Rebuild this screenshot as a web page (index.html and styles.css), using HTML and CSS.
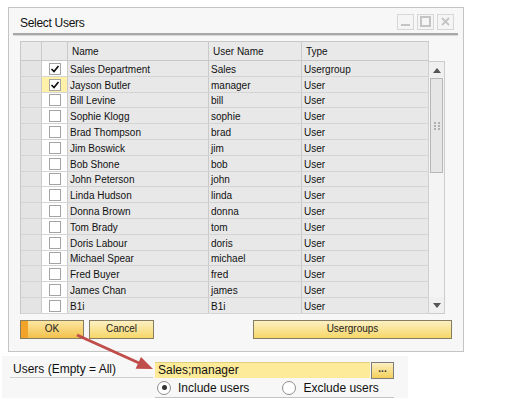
FILE: index.html
```html
<!DOCTYPE html>
<html>
<head>
<meta charset="utf-8">
<link rel="stylesheet" href="styles.css">
</head>
<body>
<div class="page">
  <div class="dialog">
    <div class="titlebar">
      <span class="title">Select Users</span>
      <div class="wbtns">
        <span class="wbtn"><svg width="11" height="11" viewBox="0 0 11 11"><rect x="1" y="8" width="9" height="2" fill="#c4c4c4"/></svg></span>
        <span class="wbtn"><svg width="11" height="11" viewBox="0 0 11 11"><rect x="1" y="1" width="9" height="9" fill="none" stroke="#c4c4c4" stroke-width="2"/></svg></span>
        <span class="wbtn"><svg width="11" height="11" viewBox="0 0 11 11"><path d="M2 2 L9 9 M9 2 L2 9" stroke="#c4c4c4" stroke-width="1.8"/></svg></span>
      </div>
    </div>
    <div class="sep"></div>
    <div class="gridwrap">
      <div class="grid">
        <div class="row head">
          <div class="c rh"></div><div class="c cb"></div><div class="c nm">Name</div><div class="c un">User Name</div><div class="c ty">Type</div>
        </div>
        <div class="row"><div class="c rh"></div><div class="c cb"><span class="chk on"><svg width="10" height="10" viewBox="0 0 10 10"><path d="M1.5 5 L4 7.5 L8.5 2" fill="none" stroke="#111" stroke-width="1.7"/></svg></span></div><div class="c nm">Sales Department</div><div class="c un">Sales</div><div class="c ty">Usergroup</div></div>
        <div class="row"><div class="c rh"></div><div class="c cb focus"><span class="chk on"><svg width="10" height="10" viewBox="0 0 10 10"><path d="M1.5 5 L4 7.5 L8.5 2" fill="none" stroke="#111" stroke-width="1.7"/></svg></span></div><div class="c nm">Jayson Butler</div><div class="c un">manager</div><div class="c ty">User</div></div>
        <div class="row"><div class="c rh"></div><div class="c cb"><span class="chk"></span></div><div class="c nm">Bill Levine</div><div class="c un">bill</div><div class="c ty">User</div></div>
        <div class="row"><div class="c rh"></div><div class="c cb"><span class="chk"></span></div><div class="c nm">Sophie Klogg</div><div class="c un">sophie</div><div class="c ty">User</div></div>
        <div class="row"><div class="c rh"></div><div class="c cb"><span class="chk"></span></div><div class="c nm">Brad Thompson</div><div class="c un">brad</div><div class="c ty">User</div></div>
        <div class="row"><div class="c rh"></div><div class="c cb"><span class="chk"></span></div><div class="c nm">Jim Boswick</div><div class="c un">jim</div><div class="c ty">User</div></div>
        <div class="row"><div class="c rh"></div><div class="c cb"><span class="chk"></span></div><div class="c nm">Bob Shone</div><div class="c un">bob</div><div class="c ty">User</div></div>
        <div class="row"><div class="c rh"></div><div class="c cb"><span class="chk"></span></div><div class="c nm">John Peterson</div><div class="c un">john</div><div class="c ty">User</div></div>
        <div class="row"><div class="c rh"></div><div class="c cb"><span class="chk"></span></div><div class="c nm">Linda Hudson</div><div class="c un">linda</div><div class="c ty">User</div></div>
        <div class="row"><div class="c rh"></div><div class="c cb"><span class="chk"></span></div><div class="c nm">Donna Brown</div><div class="c un">donna</div><div class="c ty">User</div></div>
        <div class="row"><div class="c rh"></div><div class="c cb"><span class="chk"></span></div><div class="c nm">Tom Brady</div><div class="c un">tom</div><div class="c ty">User</div></div>
        <div class="row"><div class="c rh"></div><div class="c cb"><span class="chk"></span></div><div class="c nm">Doris Labour</div><div class="c un">doris</div><div class="c ty">User</div></div>
        <div class="row"><div class="c rh"></div><div class="c cb"><span class="chk"></span></div><div class="c nm">Michael Spear</div><div class="c un">michael</div><div class="c ty">User</div></div>
        <div class="row"><div class="c rh"></div><div class="c cb"><span class="chk"></span></div><div class="c nm">Fred Buyer</div><div class="c un">fred</div><div class="c ty">User</div></div>
        <div class="row"><div class="c rh"></div><div class="c cb"><span class="chk"></span></div><div class="c nm">James Chan</div><div class="c un">james</div><div class="c ty">User</div></div>
        <div class="row"><div class="c rh"></div><div class="c cb"><span class="chk"></span></div><div class="c nm">B1i</div><div class="c un">B1i</div><div class="c ty">User</div></div>
      </div>
      <div class="vscroll">
        <div class="sbbtn"><svg width="8" height="5" viewBox="0 0 8 5"><path d="M0 5 L4 0 L8 5 Z" fill="#555"/></svg></div>
        <div class="thumb"><svg width="6" height="8" viewBox="0 0 6 8"><g fill="#b0b0b0"><rect x="0" y="0" width="2" height="2"/><rect x="4" y="0" width="2" height="2"/><rect x="0" y="3" width="2" height="2"/><rect x="4" y="3" width="2" height="2"/><rect x="0" y="6" width="2" height="2"/><rect x="4" y="6" width="2" height="2"/></g></svg></div>
        <div class="track"></div>
        <div class="sbbtn"><svg width="8" height="5" viewBox="0 0 8 5"><path d="M0 0 L8 0 L4 5 Z" fill="#555"/></svg></div>
      </div>
    </div>
    <div class="btnrow">
      <div class="btn ok">OK</div>
      <div class="btn cancel">Cancel</div>
      <div class="btn ugroups">Usergroups</div>
    </div>
  </div>
  <div class="form">
    <div class="frow">
      <div class="flabel">Users (Empty = All)</div>
      <div class="finput">Sales;manager</div>
      <div class="fbtn">...</div>
    </div>
    <div class="rrow">
      <span class="radio on"></span><span class="rlabel">Include users</span>
      <span class="radio second"></span><span class="rlabel">Exclude users</span>
    </div>
  </div>
  <svg class="arrow" width="513" height="406" viewBox="0 0 513 406">
    <line x1="77" y1="335" x2="139" y2="363" stroke="#bf4e4a" stroke-width="3"/>
    <polygon points="153,369 135.6,368.7 141,356.9" fill="#bf4e4a"/>
  </svg>
</div>
</body>
</html>
```

FILE: styles.css
```css
body {
  margin: 0;
  background: #ffffff;
  font-family: "Liberation Sans", Arial, sans-serif;
  color: #111;
}

.page {
  position: relative;
  width: 513px;
  height: 406px;
  overflow: hidden;
}

.dialog {
  margin: 7px 0 0 8px;
  width: 456px;
  height: 345px;
  box-sizing: border-box;
  border: 1px solid #c4c4c4;
  background: #f7f7f7;
  display: flex;
  flex-direction: column;
}

.titlebar {
  height: 25px;
  display: flex;
  align-items: center;
  padding: 0 9px 0 11px;
}

.title {
  font-size: 12px;
  letter-spacing: -0.3px;
  margin-top: 5px;
  color: #111;
}

.wbtns {
  margin-left: auto;
  display: flex;
  gap: 3px;
  margin-top: 2px;
}

.wbtn {
  width: 17px;
  height: 16px;
  box-sizing: border-box;
  border: 1px solid #d6d6d6;
  background: #f5f5f5;
  display: flex;
  align-items: center;
  justify-content: center;
}

.sep {
  height: 3px;
  margin: 0 5px 0 4px;
  background: linear-gradient(#a8a8a8 0 2px, #d9d9d9 2px);
}

.gridwrap {
  display: flex;
  margin: 5px 0 0 11px;
}

.grid {
  width: 409px;
  box-sizing: border-box;
  border-left: 1px solid #c8c8c8;
}

.row {
  display: flex;
  height: 15.81px;
  box-sizing: border-box;
  border-bottom: 1px solid #d4d4d4;
}

.row.head {
  height: 20px;
  border-top: 1px solid #c8c8c8;
  border-bottom: 1px solid #c8c8c8;
}

.c {
  box-sizing: border-box;
  border-right: 1px solid #cacaca;
  font-size: 10px;
  padding-left: 2px;
  padding-top: 2px;
  white-space: nowrap;
  display: flex;
  align-items: center;
  background: #e8e8e8;
  overflow: hidden;
}

.head .c {
  padding-left: 4px;
  padding-top: 0;
  background: #e9e9e9;
}

.rh { width: 21px; background: #e4e4e4; }
.cb { width: 26px; background: #ffffff; justify-content: center; padding-left: 0; padding-top: 1px; }
.head .cb { background: #e9e9e9; }
.cb.focus { background: #fff2a8; }
.nm { width: 141px; }
.un { width: 93px; }
.ty { width: 127px; border-right: 1px solid #d0d0d0; }

.chk {
  width: 12px;
  height: 12px;
  box-sizing: border-box;
  border: 1px solid #a4a4a4;
  background: #fff;
  display: flex;
  align-items: center;
  justify-content: center;
}

.vscroll {
  width: 16px;
  height: 253px;
  margin-top: 20px;
  box-sizing: border-box;
  border: 1px solid #cccccc;
  border-left: none;
  background: #f4f4f4;
  display: flex;
  flex-direction: column;
}

.sbbtn {
  height: 16px;
  display: flex;
  align-items: center;
  justify-content: center;
  background: #f0f0f0;
}

.thumb {
  height: 95px;
  margin: 0 1px;
  box-sizing: border-box;
  border: 1px solid #b8b8b8;
  background: #e6e6e6;
  display: flex;
  align-items: center;
  justify-content: center;
}

.track { flex: 1; }

.btnrow {
  display: flex;
  margin: 6px 0 0 11px;
  height: 19px;
}

.btn {
  box-sizing: border-box;
  height: 19px;
  border: 1px solid #857d62;
  font-size: 10px;
  display: flex;
  align-items: center;
  justify-content: center;
  padding-bottom: 2px;
  background: linear-gradient(#fdf0c2, #f6d768);
  color: #222;
}

.ok {
  width: 64px;
  background: linear-gradient(to right, #f1a32a 0 7px, transparent 7px), linear-gradient(#fbe6a2, #f3c14c);
}

.cancel {
  width: 65px;
  margin-left: 5px;
}

.ugroups {
  width: 199px;
  margin-left: 99px;
}

.form {
  margin: 4px 0 0 2px;
  width: 406px;
  height: 42px;
  box-sizing: border-box;
  background: #f7f7f7;
  padding-top: 6px;
}

.frow {
  display: flex;
  height: 16px;
}

.flabel {
  width: 143px;
  height: 16px;
  margin-left: 8px;
  box-sizing: border-box;
  border-bottom: 1px solid #cfcfcf;
  padding-left: 3px;
  font-size: 12px;
  line-height: 14px;
  color: #111;
}

.finput {
  width: 215px;
  height: 16px;
  margin-left: 2px;
  box-sizing: border-box;
  background: #fdeb9a;
  border-top: 1px solid #e2cf7a;
  padding-left: 3px;
  font-size: 12px;
  line-height: 14px;
  color: #111;
}

.fbtn {
  width: 23px;
  height: 17px;
  margin-left: 1px;
  box-sizing: border-box;
  border: 1px solid #7c7c7c;
  background: linear-gradient(#fdf0c2, #f3cf5a);
  font-size: 10px;
  font-weight: bold;
  display: flex;
  justify-content: center;
  line-height: 12px;
  color: #333;
}

.rrow {
  margin-left: 153px;
  width: 239px;
  height: 20px;
  box-sizing: border-box;
  border-bottom: 1px solid #c4c4c4;
  display: flex;
  align-items: center;
  padding-left: 2px;
}

.radio {
  width: 14px;
  height: 14px;
  box-sizing: border-box;
  border: 1px solid #8e8e8e;
  border-radius: 50%;
  background: #fff;
  display: flex;
  align-items: center;
  justify-content: center;
}

.radio.on::after {
  content: "";
  width: 5px;
  height: 5px;
  border-radius: 50%;
  background: #333;
}

.radio.second {
  margin-left: 33px;
}

.rlabel {
  font-size: 12px;
  margin-left: 7px;
  color: #111;
}

.arrow {
  position: absolute;
  left: 0;
  top: 0;
  pointer-events: none;
}
```
